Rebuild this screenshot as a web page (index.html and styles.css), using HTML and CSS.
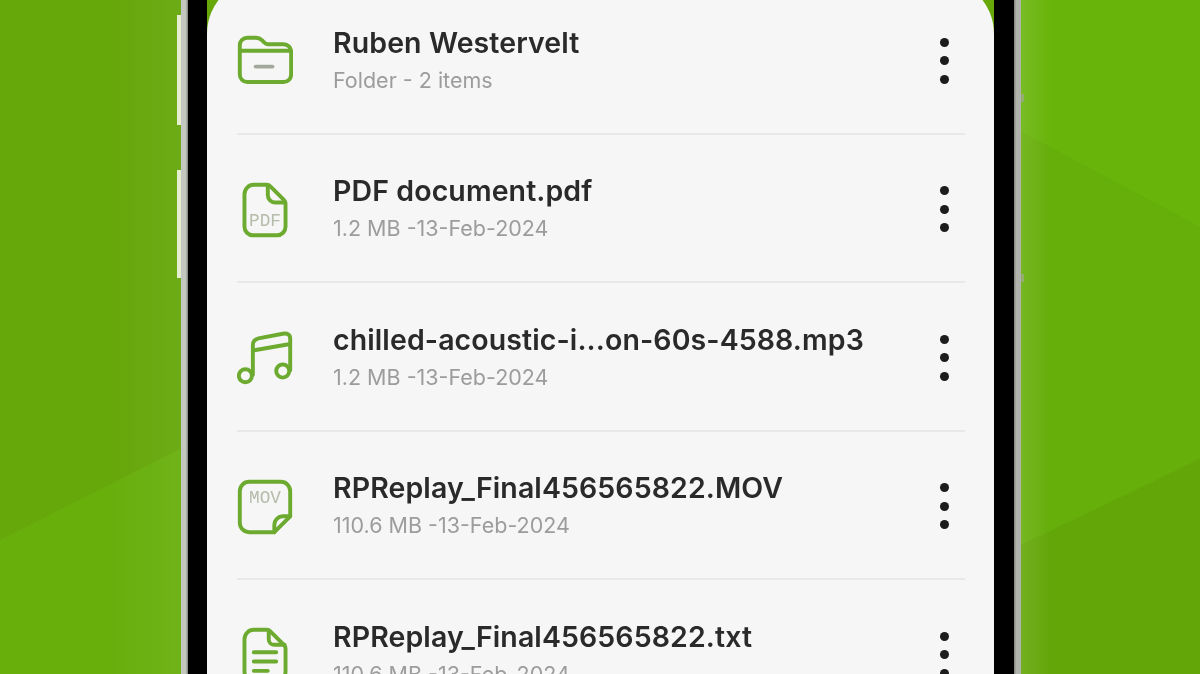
FILE: index.html
```html
<!DOCTYPE html>
<html lang="en">
<head>
    <meta charset="UTF-8">
    <meta name="viewport" content="width=device-width, initial-scale=1.0">
    <title>My Files</title>
    <link rel="stylesheet" href="styles.css">
</head>
<body>
    <div class="backdrop">
        <div class="side side-left"></div>
        <div class="phone">
            <span class="side-btn side-btn-up"></span>
            <span class="side-btn side-btn-down"></span>
            <span class="side-notch side-notch-up"></span>
            <span class="side-notch side-notch-down"></span>
            <div class="bezel">
                <div class="screen-top">
                    <div class="screen">
                        <ul class="file-list">
                            <li class="file-row">
                                <svg class="file-icon" viewBox="0 0 60 60"><path d="M3 19V13a8 8 0 0 1 8-8h9c3 0 5 1 7 3l2 2c1 1 2 2 4 2h17a8 8 0 0 1 8 8v24.500a8 8 0 0 1-8 8H11a8 8 0 0 1-8-8V19h54"/><path class="icon-dash" d="M20 36h18"/></svg>
                                <div class="file-text">
                                    <div class="file-name">Ruben Westervelt</div>
                                    <div class="file-meta">Folder - 2 items</div>
                                </div>
                                <div class="kebab"><i></i><i></i><i></i></div>
                            </li>
                            <li class="file-row">
                                <svg class="file-icon" viewBox="0 0 60 60"><path d="M18 3h14c2 0 3 1 4 2l14 14c1 1 2 2 2 4v25a9 9 0 0 1-9 9H17a9 9 0 0 1-9-9V13A10 10 0 0 1 18 3z"/><path d="M33 4v10a8 8 0 0 0 8 8h10"/><text class="icon-label" x="30" y="47">PDF</text></svg>
                                <div class="file-text">
                                    <div class="file-name">PDF document.pdf</div>
                                    <div class="file-meta">1.2 MB -13-Feb-2024</div>
                                </div>
                                <div class="kebab"><i></i><i></i><i></i></div>
                            </li>
                            <li class="file-row">
                                <svg class="file-icon" viewBox="0 0 60 60"><circle cx="9" cy="49" r="7"/><circle cx="49" cy="44" r="7"/><path d="M17 48V16c0-4 2-6 6-7l26-5c5-1 8 1 8 5v34M17 22l40-7"/></svg>
                                <div class="file-text">
                                    <div class="file-name">chilled-acoustic-i...on-60s-4588.mp3</div>
                                    <div class="file-meta">1.2 MB -13-Feb-2024</div>
                                </div>
                                <div class="kebab"><i></i><i></i><i></i></div>
                            </li>
                            <li class="file-row">
                                <svg class="file-icon" viewBox="0 0 60 60"><path d="M13 3h34a10 10 0 0 1 10 10v27L40 57H13A10 10 0 0 1 3 47V13A10 10 0 0 1 13 3z"/><path d="M40 57V49a9 9 0 0 1 9-9h8"/><text class="icon-label" x="30" y="26">MOV</text></svg>
                                <div class="file-text">
                                    <div class="file-name">RPReplay_Final456565822.MOV</div>
                                    <div class="file-meta">110.6 MB -13-Feb-2024</div>
                                </div>
                                <div class="kebab"><i></i><i></i><i></i></div>
                            </li>
                            <li class="file-row">
                                <svg class="file-icon" viewBox="0 0 60 60"><path d="M18 3h14c2 0 3 1 4 2l14 14c1 1 2 2 2 4v25a9 9 0 0 1-9 9H17a9 9 0 0 1-9-9V13A10 10 0 0 1 18 3z"/><path d="M34 4v9a6 6 0 0 0 6 6h11"/><path d="M18 27h24M18 37h24M18 47h15"/></svg>
                                <div class="file-text">
                                    <div class="file-name">RPReplay_Final456565822.txt</div>
                                    <div class="file-meta">110.6 MB -13-Feb-2024</div>
                                </div>
                                <div class="kebab"><i></i><i></i><i></i></div>
                            </li>
                        </ul>
                    </div>
                </div>
            </div>
        </div>
        <div class="side side-right"></div>
    </div>
</body>
</html>
```

FILE: styles.css
```css
html, body {
    height: 100%;
    margin: 0;
}
body {
    overflow: hidden;
    font-family: Inter, 'Noto Sans', sans-serif;
    background-color: #66a80a;
}
.backdrop {
    height: 674px;
    display: flex;
    overflow: hidden;
    filter: blur(0.5px);
}
.side {
    height: 100%;
}
.side-left {
    width: 181px;
    background:
        linear-gradient(90deg, rgba(255,255,255,0) 110px, rgba(255,255,255,0.05) 181px),
        linear-gradient(153.2deg, #66a70a 482px, #68af0c 482px);
}
.side-right {
    flex: 1;
    background:
        linear-gradient(90deg, rgba(255,255,255,0.1) 0, rgba(255,255,255,0) 30px),
        linear-gradient(154.3deg, rgba(98,165,8,0) 491px, #63a608 491px),
        linear-gradient(208deg, #69b40a 200px, #66ae0a 200px);
}
.phone {
    position: relative;
    flex: none;
    width: 840px;
    height: 720px;
    box-sizing: border-box;
    padding: 0 7px;
    background: linear-gradient(90deg, #c4c6c0 0 5px, #8c8e88 6px, #8c8e88 calc(100% - 6px), #b0b2ac calc(100% - 5px));
}
.side-btn {
    position: absolute;
    left: -4px;
    width: 4px;
    background-color: #e6eed0;
}
.side-btn-up {
    top: 15px;
    height: 110px;
}
.side-btn-down {
    top: 170px;
    height: 108px;
}
.side-notch {
    position: absolute;
    right: -3px;
    width: 3px;
    height: 8px;
    background-color: #93ad6c;
}
.side-notch-up {
    top: 94px;
}
.side-notch-down {
    top: 274px;
}
.bezel {
    height: 100%;
    box-sizing: border-box;
    padding: 0 20px 0 19px;
    background-color: #000;
}
.screen-top {
    height: 100%;
    background-color: #66a80a;
}
.screen {
    height: calc(100% + 22px);
    position: relative;
    top: -22px;
    background-color: #f6f6f6;
    border-radius: 56px 56px 0 0;
    overflow: hidden;
}
.file-list {
    list-style: none;
    margin: 8px 0 0;
    padding: 0 29px 0 30px;
}
.file-row {
    display: flex;
    align-items: center;
    height: 148.5px;
    box-sizing: border-box;
    border-bottom: 2px solid #e8e8e8;
}
.file-icon {
    flex: none;
    width: 56px;
    height: 56px;
    margin: 4px 40px 0 0;
    fill: none;
    stroke: #6cab30;
    stroke-width: 4.2;
    stroke-linecap: round;
    stroke-linejoin: round;
}
.icon-dash {
    stroke: #a3a89c;
}
.icon-label {
    fill: #b5bcaa;
    stroke: none;
    font-size: 19px;
    font-weight: 400;
    font-family: 'Liberation Mono', monospace;
    text-anchor: middle;
}
.file-text {
    flex: 1;
    min-width: 0;
}
.file-name {
    font-size: 28.5px;
    font-weight: 600;
    letter-spacing: 0.1px;
    line-height: 34px;
    color: #2a2a2a;
    white-space: nowrap;
}
.file-meta {
    margin-top: 7px;
    font-size: 21.5px;
    line-height: 26px;
    color: #9c9c9c;
    white-space: nowrap;
}
.kebab {
    flex: none;
    display: flex;
    flex-direction: column;
    gap: 9.5px;
    margin: 3px 16px 0 0;
}
.kebab i {
    display: block;
    width: 9px;
    height: 9px;
    border-radius: 50%;
    background-color: #1c1c1c;
}
```
